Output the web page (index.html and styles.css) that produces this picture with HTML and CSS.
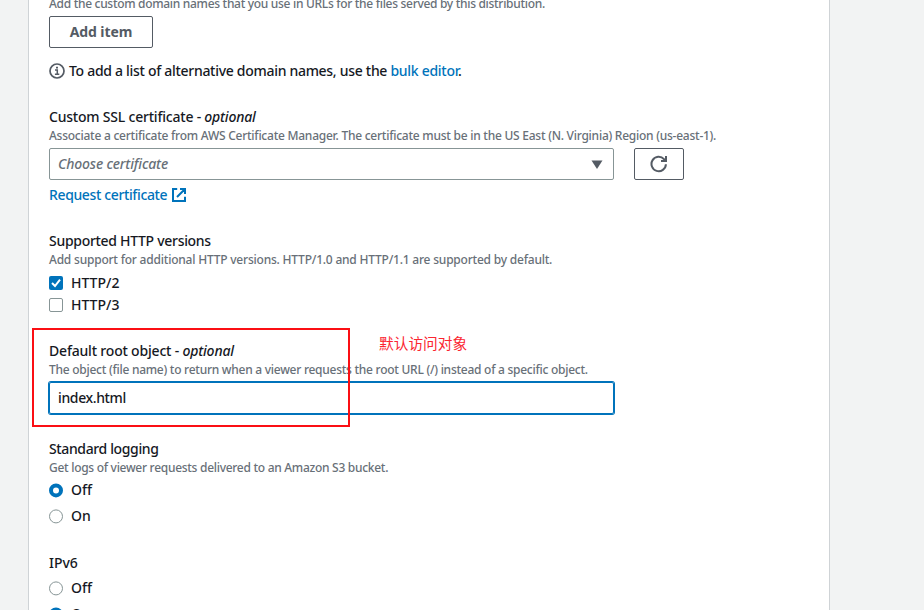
FILE: index.html
```html
<!DOCTYPE html>
<html lang="en">
<head>
<meta charset="utf-8">
<title>Distribution settings</title>
<link rel="stylesheet" href="styles.css">
</head>
<body>
<main class="panel">
  <section class="field">
    <p class="hint h-names"><span>Add the custom domain names that you use in URLs for the files served by this distribution.</span></p>
    <button class="btn btn-add" type="button"><span>Add item</span></button>
    <p class="info">
      <svg class="info-icon" viewBox="0 0 16 16"><circle cx="8" cy="8" r="7" fill="none" stroke="#545b64" stroke-width="1.7"/><path d="M6 7.1h2.3v4.1M5.9 11.3h4.4" fill="none" stroke="#545b64" stroke-width="1.5"/><path d="M7 3.8h2v1.7H7z" fill="#545b64"/></svg>
      <span class="info-text">To add a list of alternative domain names, use the <a href="#">bulk editor</a>.</span>
    </p>
  </section>

  <section class="field">
    <h2 class="label l-ssl"><span>Custom SSL certificate - <i>optional</i></span></h2>
    <p class="hint h-ssl"><span>Associate a certificate from AWS Certificate Manager. The certificate must be in the US East (N. Virginia) Region (us-east-1).</span></p>
    <div class="row">
      <div class="select"><span>Choose certificate</span><svg class="caret" viewBox="0 0 12 9"><path d="M.5.5h11L6 9z" fill="#545b64"/></svg></div>
      <button class="btn btn-refresh" type="button" aria-label="Refresh"><svg viewBox="0 0 18 18"><path d="M15.9 9.2A7.2 7.2 0 1 1 14 4.1l1 1.3" fill="none" stroke="#545b64" stroke-width="2"/><path d="M16 1v5h-5" fill="none" stroke="#545b64" stroke-width="2"/></svg></button>
    </div>
    <a class="request" href="#"><span>Request certificate</span><svg viewBox="0 0 16 16"><path d="M6.2 2H2v12h12V9.8M9 2h5v5M14 2 6 10" fill="none" stroke="#0073bb" stroke-width="2"/></svg></a>
  </section>

  <section class="field">
    <h2 class="label l-http"><span>Supported HTTP versions</span></h2>
    <p class="hint h-http"><span>Add support for additional HTTP versions. HTTP/1.0 and HTTP/1.1 are supported by default.</span></p>
    <div class="option"><span class="box checked"><svg viewBox="0 0 14 14"><path d="m3 7 3 3 5-6.3" fill="none" stroke="#fff" stroke-width="2"/></svg></span><span class="proto">HTTP/2</span></div>
    <div class="option"><span class="box"></span><span class="proto">HTTP/3</span></div>
  </section>

  <section class="field">
    <h2 class="label l-root"><span>Default root object - <i>optional</i></span></h2>
    <p class="hint h-root"><span>The object (file name) to return when a viewer requests the root URL (/) instead of a specific object.</span></p>
    <div class="input"><span>index.html</span></div>
    <div class="highlight"></div>
    <div class="note" lang="zh-CN">默认访问对象</div>
  </section>

  <section class="field">
    <h2 class="label l-log"><span>Standard logging</span></h2>
    <p class="hint h-log"><span>Get logs of viewer requests delivered to an Amazon S3 bucket.</span></p>
    <div class="radios">
      <div class="option"><span class="radio on"></span><span>Off</span></div>
      <div class="option"><span class="radio"></span><span>On</span></div>
    </div>
  </section>

  <section class="field">
    <h2 class="label l-ip"><span>IPv6</span></h2>
    <div class="radios">
      <div class="option"><span class="radio"></span><span>Off</span></div>
      <div class="option"><span class="radio on"></span><span>On</span></div>
    </div>
  </section>
</main>
</body>
</html>
```
FILE: styles.css
```css
* { box-sizing: border-box; }
html, body { height: 610px; overflow: hidden; }
body {
  margin: 0;
  background: #f2f3f3;
  color: #16191f;
  font: 500 14px/22px "Noto Sans", "Open Sans", sans-serif;
}
p, h2 { margin: 0; }
a { color: #0073bb; text-decoration: none; }
span { white-space: nowrap; }

.panel {
  display: flex;
  flex-direction: column;
  gap: 24px;
  width: 802px;
  height: 614px;
  margin-left: 28px;
  margin-top: -4px;
  padding-left: 20px;
  background: #fff;
  border: solid #cfd3d6;
  border-width: 0 1px;
}
.field { position: relative; flex: none; }
.label { font-size: 14px; font-weight: 500; }
.hint {
  margin-bottom: 4px;
  color: #687078;
  font-size: 12px;
  line-height: 16px;
}

.h-names { letter-spacing: -0.305px; }
.h-ssl { letter-spacing: -0.248px; }
.h-http { letter-spacing: -0.213px; }
.h-root { letter-spacing: -0.26px; }
.h-log { letter-spacing: -0.285px; }
.l-ssl { letter-spacing: -0.21px; }
.l-http { letter-spacing: -0.3px; }
.l-root { letter-spacing: -0.19px; }
.l-log { letter-spacing: -0.37px; }
.info-text { letter-spacing: -0.295px; }

.btn {
  display: flex;
  align-items: center;
  justify-content: center;
  height: 32px;
  padding: 0;
  background: #fff;
  border: 1px solid #545b64;
  border-radius: 2px;
  color: #545b64;
  font: 700 14px/22px "Noto Sans", sans-serif;
}
.btn-add { width: 104px; letter-spacing: -0.1px; }
.btn-refresh { width: 50px; }
.btn-refresh svg { width: 18px; height: 18px; }

.info { display: flex; align-items: center; gap: 4px; margin-top: 12px; }
.info-icon { width: 16px; height: 16px; }

.row { display: flex; gap: 20px; }
.select, .input {
  display: flex;
  align-items: center;
  justify-content: space-between;
  width: 565px;
  height: 32px;
  padding: 0 10px 0 8px;
  border: 1px solid #879596;
  border-radius: 2px;
}
.select { color: #687078; font-style: italic; letter-spacing: -0.16px; }
.caret { width: 12px; height: 9px; }
.input { border-color: #0073bb; box-shadow: 0 0 0 1px #0073bb; letter-spacing: -0.37px; }
.request { display: flex; align-items: center; gap: 4px; margin-top: 4px; letter-spacing: -0.37px; }
.request svg { width: 16px; height: 16px; }

.option { display: flex; align-items: center; gap: 8px; height: 22px; }
.box, .radio { width: 14px; height: 14px; border: 1px solid #879596; }
.box { border-radius: 2px; }
.box.checked { display: flex; border: 0; background: #0073bb; }
.radio { border-radius: 50%; }
.radio.on { border: 4.5px solid #0073bb; }
.radios { display: flex; flex-direction: column; gap: 4px; margin-top: 4px; transform: translateY(-0.6px); }

.highlight {
  position: absolute;
  left: -17px;
  top: -12px;
  width: 318px;
  height: 99px;
  border: 2px solid #fb0f14;
}
.note {
  position: absolute;
  left: 330px;
  top: -8px;
  color: #fb2530;
  font: 14.7px/22px "Noto Sans CJK SC", sans-serif;
}
```
